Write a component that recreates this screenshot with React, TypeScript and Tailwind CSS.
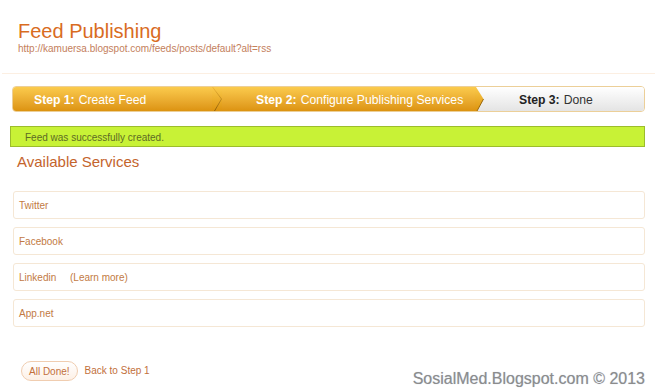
const services = [
  { label: "Twitter" },
  { label: "Facebook" },
  { label: "Linkedin", extra: "(Learn more)" },
  { label: "App.net" },
];

const OrangeStops = () => (
  <>
    <stop offset="0" stopColor="#fbcb4c" />
    <stop offset="1" stopColor="#dc930f" />
  </>
);

const App = () => {
  return (
    <div className="w-[657px] h-[389px] overflow-hidden bg-white font-['Liberation_Sans',Arial,sans-serif]">
      {/* Header */}
      <div className="pt-[20px] pl-[18px]">
        <h1 className="text-[20px] leading-[22px] text-[#d96c1f]">Feed Publishing</h1>
        <div className="mt-[1px] text-[10px] leading-[12px] text-[#c4805c]">
          http://kamuersa.blogspot.com/feeds/posts/default?alt=rss
        </div>
      </div>
      <div className="mt-[18px] mx-[2px] h-px bg-[#fcefe2]" />

      {/* Steps */}
      <div className="mx-[12px] mt-[12px] flex h-[26px] overflow-hidden rounded-[4px] border border-[#eccf98] text-[12.2px] leading-[14px]">
        <div className="flex w-[199px] items-center bg-linear-to-b from-[#fbcb4c] to-[#dc930f] pl-[21px] pt-[2px] text-white">
          <span className="font-bold">Step 1:</span>
          <span className="ml-[4px]">Create Feed</span>
        </div>
        <svg width="10" height="24" viewBox="0 0 10 24" className="shrink-0">
          <defs>
            <linearGradient id="og1" x1="0" y1="0" x2="0" y2="1">
              <OrangeStops />
            </linearGradient>
            <linearGradient id="ln1" x1="0" y1="0" x2="0" y2="1">
              <stop offset="0" stopColor="#f2b838" />
              <stop offset="1" stopColor="#8d5c06" />
            </linearGradient>
          </defs>
          <rect width="10" height="24" fill="url(#og1)" />
          <polyline points="0.5,0 9.5,12 2.5,24" fill="none" stroke="url(#ln1)" strokeWidth="1" />
        </svg>
        <div className="flex w-[253px] items-center bg-linear-to-b from-[#fbcb4c] to-[#dc930f] pl-[34px] pt-[2px] text-white">
          <span className="font-bold">Step 2:</span>
          <span className="ml-[4px]">Configure Publishing Services</span>
        </div>
        <svg width="9" height="24" viewBox="0 0 9 24" className="shrink-0">
          <defs>
            <linearGradient id="og2" x1="0" y1="0" x2="0" y2="1">
              <OrangeStops />
            </linearGradient>
            <linearGradient id="wg2" x1="0" y1="0" x2="0" y2="1">
              <stop offset="0" stopColor="#ffffff" />
              <stop offset="1" stopColor="#e4e4e4" />
            </linearGradient>
          </defs>
          <rect width="9" height="24" fill="url(#wg2)" />
          <polygon points="0,0 1,0 8.5,12 2,24 0,24" fill="url(#og2)" />
          <polyline points="8.5,12 2,24" fill="none" stroke="#9a6608" strokeWidth="1" />
        </svg>
        <div className="flex flex-1 items-center bg-linear-to-b from-white to-[#e4e4e4] pl-[35px] pt-[2px] text-[#333]">
          <span className="font-bold text-[#222]">Step 3:</span>
          <span className="ml-[4px]">Done</span>
        </div>
      </div>

      {/* Success message */}
      <div className="ml-[10px] mr-[12px] mt-[14px] flex h-[21px] items-center border border-[#9cbd2b] bg-[#c8f236] pl-[14px] pt-[1px] text-[10px] text-[#5d6b25]">
        Feed was successfully created.
      </div>

      <h2 className="mt-[6px] pl-[17px] text-[15px] leading-[18px] text-[#c4642c]">Available Services</h2>

      {/* Services */}
      <div className="ml-[13px] mr-[12px] mt-[20px] flex flex-col gap-[8px]">
        {services.map((s) => (
          <div
            key={s.label}
            className="flex h-[28px] items-center rounded-[3px] border border-[#f5e7d5] pl-[5px] text-[10px] text-[#c27a44]"
          >
            <span className="w-[51px]">{s.label}</span>
            {s.extra && <span>{s.extra}</span>}
          </div>
        ))}
      </div>

      {/* Footer */}
      <div className="mt-[34px] flex items-start pl-[21px] pr-[12px]">
        <button className="flex h-[20px] items-center rounded-full border border-[#f0cdb0] bg-linear-to-b from-white to-[#fdf0e6] px-[7px] text-[10px] text-[#c2703c]">
          All Done!
        </button>
        <span className="ml-[7px] mt-[4px] text-[10px] leading-[12px] text-[#c2703c]">Back to Step 1</span>
        <span className="ml-auto mt-[9px] text-[16px] leading-[18px] text-[#8c8c8c] [text-shadow:0_0_1px_#b8c4d8]">
          SosialMed.Blogspot.com © 2013
        </span>
      </div>
    </div>
  );
};

export default App;
